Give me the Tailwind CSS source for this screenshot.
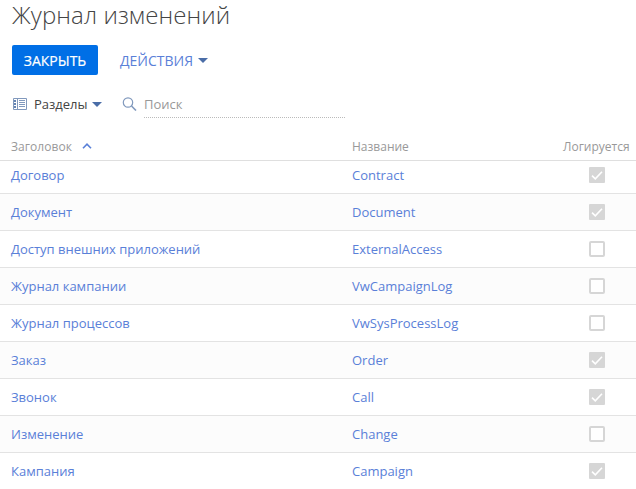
<!DOCTYPE html>
<html lang="ru">
<head>
<meta charset="utf-8">
<title>Журнал изменений</title>
<script src="https://cdn.jsdelivr.net/npm/@tailwindcss/browser@4"></script>
</head>
<body class="bg-white overflow-hidden font-['Open_Sans','Noto_Sans',sans-serif] text-[13px]">
<svg class="hidden">
  <symbol id="on" viewBox="0 0 16 16"><rect width="16" height="16" rx="1" fill="#d6d6d6"/><path d="M3 8.6l3.3 3.3L13 4.7" fill="none" stroke="#fff" stroke-width="1.6"/></symbol>
  <symbol id="off" viewBox="0 0 16 16"><rect x="1" y="1" width="14" height="14" rx="1" fill="#fff" stroke="#d6d6d6" stroke-width="2"/></symbol>
</svg>
<main class="flex h-[489px] w-[636px] flex-col">
  <h1 class="h-[45px] shrink-0 pl-3 text-[24px] font-light leading-[29px] tracking-[0.1px] text-[#444]">Журнал изменений</h1>
  <div class="flex h-[30px] shrink-0 items-center pl-3 text-[14px]">
    <button class="h-[30px] w-[86px] rounded-xs bg-[#006fe6] pt-px text-center leading-[30px] text-white [-webkit-text-stroke:0.2px_white]">ЗАКРЫТЬ</button>
    <button class="ml-[22px] flex items-center text-[#5a80d8]"><span class="w-[73px] whitespace-nowrap">ДЕЙСТВИЯ</span>
      <svg class="ml-[5px] h-[5px] w-[10px]" viewBox="0 0 10 5"><path d="M0 0h10L5 5z" fill="#4a6da7"/></svg></button>
  </div>
  <div class="flex h-[58px] shrink-0 items-center pl-[13px]">
    <svg class="h-3 w-[14px]" viewBox="0 0 14 12"><path d="M.5.5h13v11H.5zM4.5.5v11M6 2.5h6M6 4.5h6M6 6.5h6M6 8.5h6" fill="none" stroke="#8199bd"/><path d="M1 2h2v2H1zM1 5h2v2H1zM1 8h2v2H1z" fill="#6484b3"/></svg>
    <span class="ml-[7px] w-[53px] whitespace-nowrap pt-0.5 text-[#444]">Разделы</span>
    <svg class="ml-[5px] h-[5px] w-[10px]" viewBox="0 0 10 5"><path d="M0 0h10L5 5z" fill="#4a6da7"/></svg>
    <svg class="ml-5 h-[14px] w-[15px]" viewBox="0 0 15 14"><circle cx="6" cy="5.5" r="4.7" fill="none" stroke="#8199bd" stroke-width="1.2"/><path d="M9.5 9l4.5 4.5" stroke="#8199bd" stroke-width="1.6"/></svg>
    <div class="ml-[7px] h-[27px] w-[201px] border-b border-dotted border-[#bbb] leading-[27px] text-[#999]">Поиск</div>
  </div>
  <div class="flex h-7 shrink-0 border-b border-[#dfdfdf] pl-[11px] text-[12px] leading-[28px] text-[#999]">
    <div class="flex w-[341px] items-center"><span class="tracking-[0.05px]">Заголовок</span><svg class="mb-0.5 ml-2.5 h-[6px] w-[10px]" viewBox="0 0 10 6"><path d="M1 5.2l4-4 4 4" fill="none" stroke="#5a80d8" stroke-width="1.6"/></svg></div>
    <div class="w-[211px]">Название</div>
    <div>Логируется</div>
  </div>
  <div class="min-h-0 flex-1 overflow-hidden">
    <div class="-mt-1 text-[#5a80d8] *:flex *:h-[37px] *:items-center *:border-b *:border-[#e3e3e3] *:pl-[11px] *:even:bg-[#fcfcfc]">
      <div><span class="w-[341px] pt-0.5">Договор</span><span class="w-[237px] pt-0.5">Contract</span><svg class="size-4"><use href="#on"/></svg></div>
      <div><span class="w-[341px] pt-0.5">Документ</span><span class="w-[237px] pt-0.5">Document</span><svg class="size-4"><use href="#on"/></svg></div>
      <div><span class="w-[341px] pt-0.5">Доступ внешних приложений</span><span class="w-[237px] pt-0.5">ExternalAccess</span><svg class="size-4"><use href="#off"/></svg></div>
      <div><span class="w-[341px] pt-0.5">Журнал кампании</span><span class="w-[237px] pt-0.5">VwCampaignLog</span><svg class="size-4"><use href="#off"/></svg></div>
      <div><span class="w-[341px] pt-0.5">Журнал процессов</span><span class="w-[237px] pt-0.5">VwSysProcessLog</span><svg class="size-4"><use href="#off"/></svg></div>
      <div><span class="w-[341px] pt-0.5">Заказ</span><span class="w-[237px] pt-0.5">Order</span><svg class="size-4"><use href="#on"/></svg></div>
      <div><span class="w-[341px] pt-0.5">Звонок</span><span class="w-[237px] pt-0.5">Call</span><svg class="size-4"><use href="#on"/></svg></div>
      <div><span class="w-[341px] pt-0.5">Изменение</span><span class="w-[237px] pt-0.5">Change</span><svg class="size-4"><use href="#off"/></svg></div>
      <div><span class="w-[341px] pt-0.5">Кампания</span><span class="w-[237px] pt-0.5">Campaign</span><svg class="size-4"><use href="#on"/></svg></div>
    </div>
  </div>
</main>
</body>
</html>
